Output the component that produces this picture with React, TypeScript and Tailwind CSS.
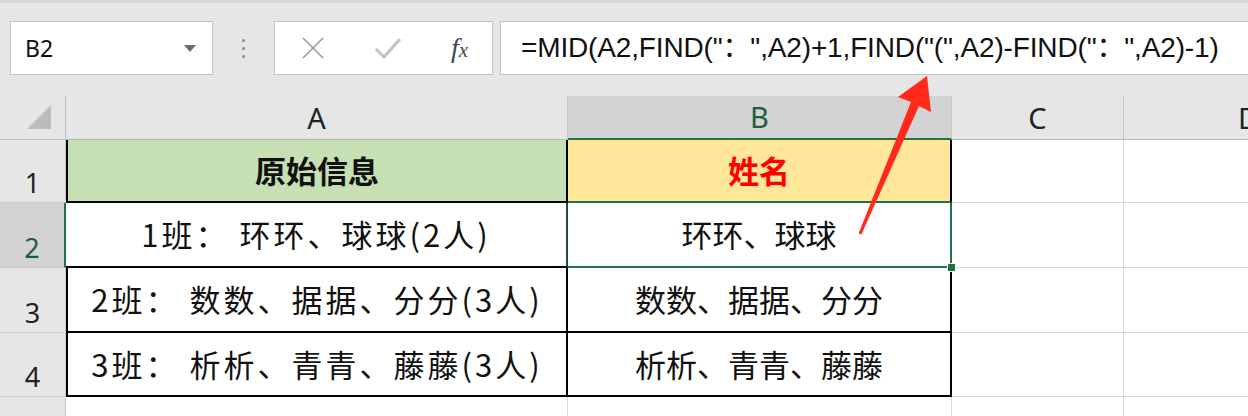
import React from "react";

const CJK = "font-['Noto_Sans_CJK_SC',sans-serif]";

function RowHead({ n, selected }: { n: string; selected?: boolean }) {
  return (
    <div
      className={`flex items-end justify-center pb-[2px] border-b border-[#c9c9c9] text-[27px] leading-none font-['Noto_Sans',sans-serif] ${
        selected ? "bg-[#d3d3d3] text-[#1f5e3d] border-r-2 border-r-[#217346]" : "bg-[#e6e6e6] text-[#222] border-r border-r-[#c9c9c9]"
      }`}
    >
      <span className="mb-[4px]">{n}</span>
    </div>
  );
}

function Blank({ last }: { last?: boolean }) {
  return <div className={`bg-white border-b border-[#d9d9d9] ${last ? "" : "border-r border-r-[#d9d9d9]"}`} />;
}

export default function App() {
  return (
    <div className="relative w-[1248px] h-[416px] overflow-hidden bg-[#e6e6e6] select-none">
      {/* formula bar */}
      <div className="h-[96px] border-t-[3px] border-[#d6d6d6] flex items-start pt-[18px] pl-[10px]">
        <div className="w-[203px] h-[54px] bg-white border border-[#c3c3c3] flex items-center justify-between pl-[14px] pr-[16px]">
          <span className="text-[23px] text-[#111] font-['Noto_Sans',sans-serif]">B2</span>
          <svg width="12" height="7" viewBox="0 0 12 7">
            <path d="M0 0h12L6 7z" fill="#6b6b6b" />
          </svg>
        </div>
        <div className="w-[61px] h-[54px] flex flex-col items-center justify-center gap-[5px]">
          <span className="w-[3px] h-[3px] rounded-full bg-[#8a8a8a]" />
          <span className="w-[3px] h-[3px] rounded-full bg-[#8a8a8a]" />
          <span className="w-[3px] h-[3px] rounded-full bg-[#8a8a8a]" />
        </div>
        <div className="w-[219px] h-[54px] bg-white border border-[#c3c3c3] flex items-center justify-between pl-[26px] pr-[24px]">
          <svg width="24" height="24" viewBox="0 0 24 24">
            <path d="M2 2L22 22M22 2L2 22" stroke="#9a9a9a" strokeWidth="1.6" fill="none" />
          </svg>
          <svg width="28" height="24" viewBox="0 0 28 24">
            <path d="M2 13L10 21L26 3" stroke="#c2c2c2" strokeWidth="3" fill="none" />
          </svg>
          <span className="text-[28px] italic text-[#4a4458] font-['Liberation_Serif',serif] leading-none">
            f<span className="text-[21px]">x</span>
          </span>
        </div>
        <div className="ml-[7px] flex-1 h-[54px] bg-white border border-r-0 border-[#c3c3c3] flex items-center pl-[20px]">
          <span className="text-[28px] text-[#111] font-['Liberation_Sans','Noto_Sans_CJK_SC',sans-serif] tracking-[-0.15px] whitespace-nowrap">
            =MID(A2,FIND("：",A2)+1,FIND("(",A2)-FIND("：",A2)-1)
          </span>
        </div>
      </div>

      {/* sheet */}
      <div className="grid grid-cols-[66px_502px_384px_172px_1fr] grid-rows-[44px_63px_65px_65px_64px_1fr] h-[320px]">
        {/* column headers */}
        <div className="bg-[#e6e6e6] border-r border-b border-[#bdbdbd] flex items-end justify-end pr-[14px] pb-[10px]">
          <svg width="24" height="24" viewBox="0 0 24 24">
            <path d="M24 0V24H0z" fill="#bcbcbc" />
          </svg>
        </div>
        <div className="bg-[#e6e6e6] border-r border-[#c6c6c6] border-b border-b-[#b5b5b5] flex items-center justify-center text-[29px] text-[#222] font-['Noto_Sans',sans-serif]">
          A
        </div>
        <div className="bg-[#d3d3d3] border-r border-[#c6c6c6] border-b-2 border-b-[#217346] flex items-center justify-center text-[29px] text-[#1f5e3d] font-['Noto_Sans',sans-serif]">
          B
        </div>
        <div className="bg-[#e6e6e6] border-r border-[#c6c6c6] border-b border-b-[#b5b5b5] flex items-center justify-center text-[29px] text-[#222] font-['Noto_Sans',sans-serif]">
          C
        </div>
        <div className="bg-[#e6e6e6] border-b border-[#b5b5b5] flex items-center pl-[114px] text-[29px] text-[#222] font-['Noto_Sans',sans-serif]">
          D
        </div>

        {/* row 1 */}
        <RowHead n="1" />
        <div className={`bg-[#c6e0b4] border-l-2 border-r-2 border-b-2 border-black flex items-center justify-center text-[31px] font-bold text-[#111] ${CJK}`}>
          原始信息
        </div>
        <div className={`bg-[#ffe699] border-r-2 border-b-2 border-r-black border-b-[#217346] flex items-center justify-center text-[31px] font-bold text-[#ff0000] ${CJK}`}>
          姓名
        </div>
        <Blank />
        <Blank last />

        {/* row 2 */}
        <RowHead n="2" selected />
        <div className={`bg-white border-r-2 border-b-2 border-r-[#1d4f37] border-b-black flex items-center justify-center text-[31px] tracking-[3px] text-[#111] ${CJK}`}>
          1班： 环环、球球(2人)
        </div>
        <div className={`relative bg-white border-r-2 border-b-2 border-[#217346] flex items-center justify-center text-[31px] text-[#111] ${CJK}`}>
          环环、球球
          <span className="absolute right-[-6px] bottom-[-6px] w-[9px] h-[9px] bg-[#217346] border border-white" />
        </div>
        <Blank />
        <Blank last />

        {/* row 3 */}
        <RowHead n="3" />
        <div className={`bg-white border-l-2 border-r-2 border-b-2 border-black flex items-center justify-center text-[31px] tracking-[3px] text-[#111] ${CJK}`}>
          2班： 数数、据据、分分(3人)
        </div>
        <div className={`bg-white border-r-2 border-b-2 border-black flex items-center justify-center text-[31px] text-[#111] ${CJK}`}>
          数数、据据、分分
        </div>
        <Blank />
        <Blank last />

        {/* row 4 */}
        <RowHead n="4" />
        <div className={`bg-white border-l-2 border-r-2 border-b-2 border-black flex items-center justify-center text-[31px] tracking-[3px] text-[#111] ${CJK}`}>
          3班： 析析、青青、藤藤(3人)
        </div>
        <div className={`bg-white border-r-2 border-b-2 border-black flex items-center justify-center text-[31px] text-[#111] ${CJK}`}>
          析析、青青、藤藤
        </div>
        <Blank />
        <Blank last />

        {/* row 5 */}
        <div className="bg-[#e6e6e6] border-r border-[#c9c9c9]" />
        <div className="bg-white border-r border-[#d9d9d9] border-l-2 border-l-white" />
        <div className="bg-white border-r border-[#d9d9d9]" />
        <div className="bg-white border-r border-[#d9d9d9]" />
        <div className="bg-white" />
      </div>

      {/* annotation arrow */}
      <svg className="absolute left-0 top-0 pointer-events-none" width="1248" height="416" viewBox="0 0 1248 416">
        <polygon
          points="858.6,233.4 861.4,234.6 919,106 931,112 927,76 898,97 911,102"
          fill="#ff2a1a"
        />
      </svg>
    </div>
  );
}
